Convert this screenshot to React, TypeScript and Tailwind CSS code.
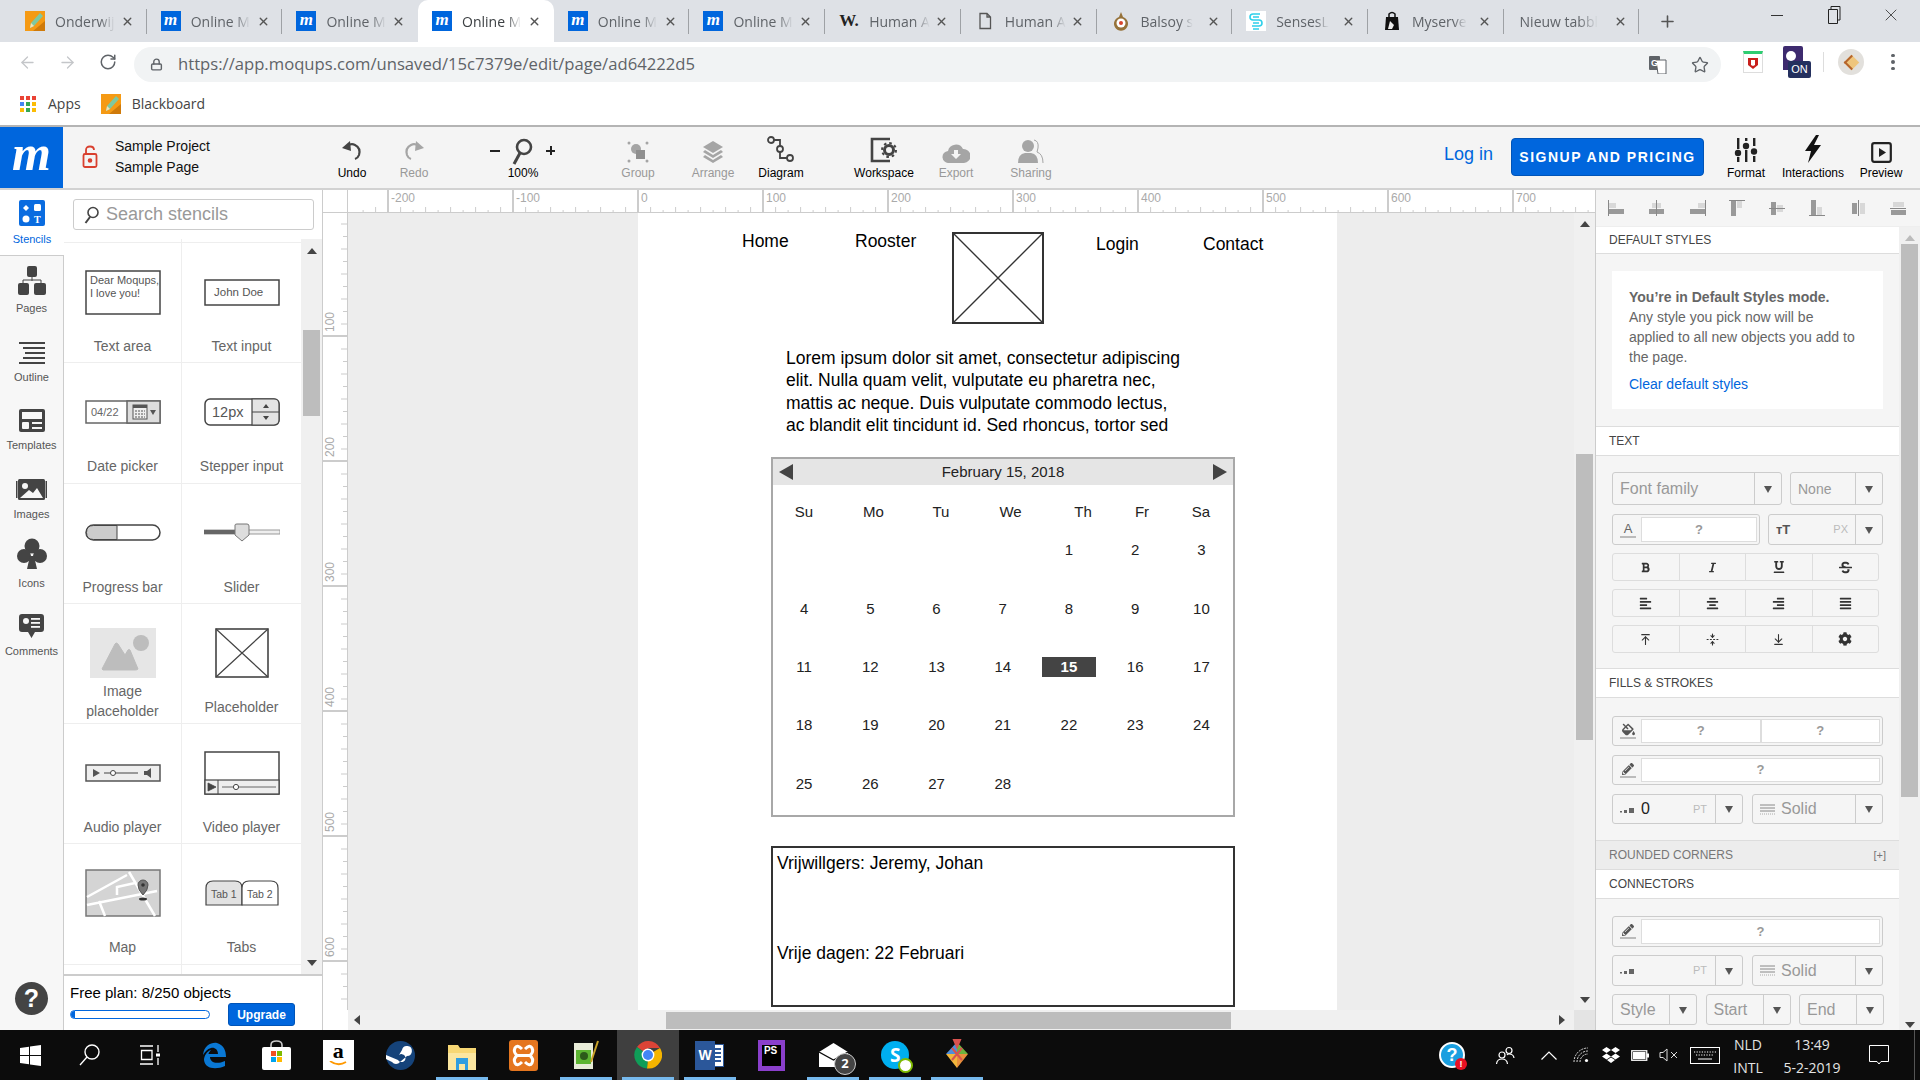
import { ReactNode } from "react";
import { ArrowDownToLine, ArrowLeft, ArrowRight, ArrowUpToLine, FoldVertical, Lock, Plus, RotateCw, Star, X } from "lucide-react";
import { FaAlignCenter, FaAlignJustify, FaAlignLeft, FaAlignRight, FaBold, FaCog, FaFillDrip, FaItalic, FaPencilAlt, FaStrikethrough, FaUnderline } from "react-icons/fa";

const Favicon = ({ kind }: { kind: string }) => {
  if (kind === "m")
    return (
      <div className="w-5 h-5 bg-[#0066dd] flex items-center justify-center text-white font-['Liberation_Serif',serif] italic font-bold text-[17px] leading-none pb-[3px]">
        m
      </div>
    );
  if (kind === "pencil")
    return (
      <svg width="20" height="20" viewBox="0 0 20 20">
        <rect width="20" height="20" fill="#f59a14" />
        <path d="M0 20 L20 20 L20 10 L8 20Z" fill="#cf7a0a" />
        <path d="M5 17 L6 12 L15 2 L18 5 L9 15Z" fill="#7fc8a0" />
        <path d="M5 17 L6 12 L9 15Z" fill="#f5e0b0" />
      </svg>
    );
  if (kind === "w") return <div className="w-5 text-[#222] font-['Liberation_Serif',serif] font-bold text-[17px] leading-5">W.</div>;
  if (kind === "doc")
    return (
      <svg width="20" height="20" viewBox="0 0 20 20" fill="none" stroke="#555" strokeWidth="1.3">
        <path d="M5 2.5 H12 L15.5 6 V17.5 H5Z M12 2.5 V6 H15.5" />
      </svg>
    );
  if (kind === "balsoy")
    return (
      <svg width="20" height="20" viewBox="0 0 20 20">
        <path d="M10 1 L12 6 A7 7 0 1 1 8 6Z" fill="#96723a" />
        <circle cx="10" cy="12" r="4.5" fill="#fff" />
        <circle cx="10" cy="12" r="2" fill="#d8442c" />
      </svg>
    );
  if (kind === "senses")
    return (
      <svg width="20" height="20" viewBox="0 0 20 20" fill="none" stroke="#2fd0ea" strokeWidth="1.6">
        <rect width="20" height="20" fill="#fff" stroke="none" />
        <path d="M14 3 H7 Q4 3 4 6 T7 9 H13 Q16 9 16 12 T13 15 H6 M7 6 H13 M7 12 H13 M7 18 H13" />
      </svg>
    );
  return (
    <svg width="20" height="20" viewBox="0 0 20 20">
      <path d="M4 6 H16 L17 19 H3Z" fill="#111" />
      <path d="M7 7 V3 Q10 0 13 3 V7" fill="none" stroke="#111" strokeWidth="1.5" />
      <path d="M8 10 L12 14 L10 18 H6Z" fill="#eee" />
    </svg>
  );
};

const tabs = [
  { kind: "pencil", title: "Onderwij" },
  { kind: "m", title: "Online M" },
  { kind: "m", title: "Online M" },
  { kind: "m", title: "Online M", active: true },
  { kind: "m", title: "Online M" },
  { kind: "m", title: "Online M" },
  { kind: "w", title: "Human A" },
  { kind: "doc", title: "Human A" },
  { kind: "balsoy", title: "Balsoy s" },
  { kind: "senses", title: "SensesL" },
  { kind: "bag", title: "Myserve" },
  { kind: "", title: "Nieuw tabbl" },
];

const TabStrip = () => (
  <div className="h-[42px] bg-[#dee1e6] flex pl-[11px] shrink-0 font-['Open_Sans',sans-serif]">
    {tabs.map((t, i) => (
      <div
        key={i}
        className={`relative w-[135.7px] h-[42px] flex items-center ${t.kind ? "pl-[14px]" : "pl-[16px]"} ${t.active ? "bg-white rounded-t-[10px]" : ""}`}
      >
        {t.kind && <Favicon kind={t.kind} />}
        <span
          className={`${t.kind ? "ml-[10px]" : ""} whitespace-nowrap text-[14px] [mask-image:linear-gradient(to_right,black_75%,transparent)] ${t.active ? "text-[#3c4043]" : "text-[#5f6368]"}`}
        >
          {t.title}
        </span>
        <X size={13} strokeWidth={2.6} className="absolute left-[110px] top-[15px] text-[#555]" />
        {!t.active && i !== 2 && <div className="absolute right-0 top-[9px] h-[25px] w-px bg-[#9ea1a5]" />}
      </div>
    ))}
    <Plus size={19} strokeWidth={2} className="ml-[19px] mt-[12px] text-[#555]" />
    <div className="ml-auto flex items-start text-[#333]">
      <div className="w-[57px] h-[30px] flex items-center justify-center"><div className="w-3 h-px bg-[#333]" /></div>
      <div className="w-[57px] h-[30px] flex items-center justify-center">
        <svg width="14" height="22" viewBox="0 0 14 22" fill="none" stroke="#222"><path d="M1.5 5.5 H10.5 V19.5 H1.5Z M4 5 V2.5 H13 V16 H11" /></svg>
      </div>
      <div className="w-[58px] h-[30px] flex items-center justify-center"><X size={20} strokeWidth={1} /></div>
    </div>
  </div>
);

const AddressBar = () => (
  <div className="h-[40px] bg-white flex items-center shrink-0 font-['Open_Sans',sans-serif] relative">
    <ArrowLeft size={19} strokeWidth={1.6} className="ml-[18px] text-[#c4c6c9]" />
    <ArrowRight size={19} strokeWidth={1.6} className="ml-[21px] text-[#c4c6c9]" />
    <RotateCw size={18} strokeWidth={2} className="ml-[22px] text-[#5f6368]" />
    <div className="ml-[17px] w-[1587px] h-[35px] mt-[5px] bg-[#f1f3f4] rounded-full flex items-center pl-[16px] self-start">
      <Lock size={13} strokeWidth={2.6} className="text-[#5f6368]" />
      <span className="ml-[15px] text-[#5f6368] text-[16.65px] whitespace-nowrap">https://app.moqups.com/unsaved/15c7379e/edit/page/ad64222d5</span>
      <div className="ml-auto mr-[12px] flex items-center gap-[24px]">
        <svg width="18" height="18" viewBox="0 0 18 18">
          <rect x="0" y="0" width="11" height="14" rx="1" fill="#5f6368" />
          <path d="M7 4 H17 V18 H9Z" fill="#fff" stroke="#5f6368" />
          <text x="2" y="10" fontSize="9" fontWeight="700" fill="#fff" fontFamily="Liberation Sans">G</text>
        </svg>
        <Star size={18} strokeWidth={1.8} className="text-[#5f6368]" />
      </div>
    </div>
    <div className="ml-[22px] w-[20px] h-[22px] border border-[#ddd] border-t-[3px] border-t-[#2ecc71] flex items-center justify-center">
      <svg width="12" height="13" viewBox="0 0 12 13"><path d="M1 1 H11 V8 L6 12 L1 8Z" fill="#c8201c" /><path d="M4 3 V8 L6 9 L8 8 V3" fill="#fff" /></svg>
    </div>
    <div className="relative ml-[20px] w-[28px] h-[32px]">
      <div className="w-[20px] h-[24px] bg-[#3d2a6e] rounded-t-[2px]" />
      <div className="absolute left-[3px] top-[5px] w-[10px] h-[10px] bg-white rounded-full" />
      <div className="absolute right-0 bottom-0 bg-[#24305e] text-white text-[11px] leading-[17px] h-[17px] w-[23px] text-center font-['Liberation_Sans',sans-serif] rounded-[2px]">ON</div>
    </div>
    <div className="ml-[12px] w-px h-[20px] bg-[#ddd]" />
    <div className="ml-[14px] w-[26px] h-[26px] rounded-full bg-[#e2e0dc] flex items-center justify-center">
      <div className="w-[11px] h-[11px] rotate-45 bg-[#eec57c] border-l-2 border-b-2 border-[#b5652c]" />
    </div>
    <div className="ml-[27px] flex flex-col gap-[3px]">
      <div className="w-[3.5px] h-[3.5px] rounded-full bg-[#5f6368]" />
      <div className="w-[3.5px] h-[3.5px] rounded-full bg-[#5f6368]" />
      <div className="w-[3.5px] h-[3.5px] rounded-full bg-[#5f6368]" />
    </div>
  </div>
);

const BookmarksBar = () => {
  const colors = ["bg-[#ea4335]", "bg-[#ea4335]", "bg-[#ea4335]", "bg-[#4285f4]", "bg-[#34a853]", "bg-[#fbbc05]", "bg-[#fbbc05]", "bg-[#34a853]", "bg-[#fbbc05]"];
  return (
    <div className="h-[45px] bg-white border-b-2 border-[#b4b4b4] flex items-center shrink-0 text-[14px] text-[#444] font-['Open_Sans',sans-serif] pl-[20px]">
      <div className="grid grid-cols-3 gap-[2px]">
        {colors.map((c, i) => (
          <div key={i} className={`w-[4px] h-[4px] ${c}`} />
        ))}
      </div>
      <span className="ml-[12px]">Apps</span>
      <div className="ml-[20px]"><Favicon kind="pencil" /></div>
      <span className="ml-[11px]">Blackboard</span>
    </div>
  );
};

const ToolBtn = ({ className, label, muted, children }: { className: string; label: string; muted?: boolean; children: ReactNode }) => (
  <div className={`flex flex-col items-center h-full ${className}`}>
    <div className="h-[37px] flex items-end justify-center pb-[1px]">{children}</div>
    <div className={`mt-[2px] text-[12px] leading-[14px] whitespace-nowrap ${muted ? "text-[#999]" : "text-black"}`}>{label}</div>
  </div>
);

const AppToolbar = () => (
  <div className="h-[63px] bg-[#f4f4f4] border-b-2 border-[#d2d2d2] flex shrink-0">
    <div className="w-[63px] h-full bg-[#0066dd] text-white flex items-center justify-center font-['Liberation_Serif',serif] italic font-bold text-[50px] leading-none pb-[10px]">m</div>
    <div className="w-[257px] flex items-center pl-[19px] pb-[2px]">
      <svg width="16" height="24" viewBox="0 0 16 24" fill="none" stroke="#d9402f" strokeWidth="1.8">
        <path d="M4 9 V5 Q4 1.5 8 1.5 Q12 1.5 12 5" />
        <rect x="1.5" y="9" width="13" height="13" rx="1.5" />
        <circle cx="8" cy="15.5" r="1.4" fill="#d9402f" />
      </svg>
      <div className="ml-[17px] text-[14px] leading-[21px] text-[#111] whitespace-nowrap">
        <div>Sample Project</div>
        <div>Sample Page</div>
      </div>
    </div>
    <ToolBtn className="w-[64px]" label="Undo">
      <svg width="22" height="24" viewBox="0 0 22 24" fill="none">
        <path d="M7 7 Q10 4 14 6 Q20 9 18 16 Q17 19 14 20" stroke="#444" strokeWidth="2.2" />
        <path d="M1 9 L9 2 L10 12Z" fill="#444" />
      </svg>
    </ToolBtn>
    <ToolBtn className="w-[60px]" label="Redo" muted>
      <svg width="22" height="24" viewBox="0 0 22 24" fill="none">
        <path d="M15 7 Q12 4 8 6 Q2 9 4 16 Q5 19 8 20" stroke="#a5a5a5" strokeWidth="2.2" />
        <path d="M21 9 L13 2 L12 12Z" fill="#a5a5a5" />
      </svg>
    </ToolBtn>
    <div className="w-[100px] ml-[29px] relative">
      <svg className="absolute left-[39px] top-[11px]" width="22" height="27" viewBox="0 0 22 27" fill="none" stroke="#444">
        <circle cx="12" cy="9" r="7" strokeWidth="2.6" />
        <path d="M8 15 L2 26" strokeWidth="3" />
      </svg>
      <div className="absolute left-[17px] top-[23px] w-[10px] h-[2px] bg-[#222]" />
      <div className="absolute left-[73px] top-[19px] w-[9px] h-[9px]">
        <div className="absolute left-0 top-[3.5px] w-[9px] h-[2px] bg-[#222]" />
        <div className="absolute left-[3.5px] top-0 h-[9px] w-[2px] bg-[#222]" />
      </div>
      <div className="absolute w-full top-[39px] text-center text-[12px] leading-[14px] text-black">100%</div>
    </div>
    <ToolBtn className="w-[70px] ml-[30px]" label="Group" muted>
      <svg width="22" height="22" viewBox="0 0 22 22" fill="#a5a5a5">
        <circle cx="2" cy="2" r="1.5" /><circle cx="20" cy="2" r="1.5" /><circle cx="2" cy="20" r="1.5" /><circle cx="20" cy="20" r="1.5" />
        <circle cx="9" cy="8" r="5" /><rect x="9" y="9" width="9" height="9" fill="#8f8f8f" />
      </svg>
    </ToolBtn>
    <ToolBtn className="w-[80px]" label="Arrange" muted>
      <svg width="22" height="23" viewBox="0 0 22 23" fill="#a5a5a5">
        <path d="M11 1 L21 7 L11 13 L1 7Z" /><path d="M3 10 L11 15 L19 10 L21 12 L11 18 L1 12Z" /><path d="M3 15 L11 20 L19 15 L21 17 L11 23 L1 17Z" />
      </svg>
    </ToolBtn>
    <ToolBtn className="w-[56px]" label="Diagram">
      <svg width="28" height="27" viewBox="0 0 28 27" fill="none" stroke="#444" strokeWidth="1.8">
        <circle cx="4" cy="4" r="3" /><circle cx="13" cy="13" r="3" /><circle cx="23" cy="22" r="3" />
        <path d="M7 4 H13 V10 M13 16 V22 H20" />
      </svg>
    </ToolBtn>
    <ToolBtn className="w-[80px] ml-[35px]" label="Workspace">
      <svg width="28" height="26" viewBox="0 0 28 26" fill="none">
        <path d="M20 2 H2 V24 H20" stroke="#444" strokeWidth="2.6" />
        <circle cx="19" cy="13" r="4.5" stroke="#444" strokeWidth="3" />
        <circle cx="19" cy="13" r="7" stroke="#444" strokeWidth="2" strokeDasharray="2.6 2.9" />
      </svg>
    </ToolBtn>
    <ToolBtn className="w-[64px]" label="Export" muted>
      <svg width="28" height="20" viewBox="0 0 28 20">
        <path d="M7 20 A6 6 0 0 1 6 8 A8 8 0 0 1 21 6 A7 7 0 0 1 22 20Z" fill="#a5a5a5" />
        <path d="M12 7 H16 V11 H19 L14 16 L9 11 H12Z" fill="#f4f4f4" />
      </svg>
    </ToolBtn>
    <ToolBtn className="w-[86px]" label="Sharing" muted>
      <svg width="26" height="24" viewBox="0 0 26 24" fill="#a5a5a5">
        <circle cx="10" cy="7" r="6" /><path d="M0 24 Q0 15 7 14 H13 Q20 15 20 24Z" />
        <path d="M16 1 Q21 2 20 9 L19 13 Q25 15 25 24" fill="none" stroke="#a5a5a5" />
      </svg>
    </ToolBtn>
    <div className="ml-auto flex items-start pr-[8px]">
      <div className="text-[#0066dd] text-[18px] leading-[22px] mt-[16px] mr-[18px]">Log in</div>
      <div className="w-[193px] h-[38px] mt-[11px] bg-[#0066dd] border border-[#0054b8] rounded-[4px] text-white text-[14px] font-bold tracking-[1.5px] flex items-center justify-center mr-[12px] whitespace-nowrap">
        SIGNUP AND PRICING
      </div>
      <ToolBtn className="w-[60px]" label="Format">
        <svg width="24" height="26" viewBox="0 0 24 26" fill="#222">
          <rect x="3" y="1" width="2.4" height="11" /><rect x="3" y="20" width="2.4" height="5" /><circle cx="4" cy="16" r="3.2" />
          <rect x="11" y="1" width="2.4" height="3" /><rect x="11" y="13" width="2.4" height="12" /><circle cx="12" cy="9" r="3.2" />
          <rect x="19" y="1" width="2.4" height="8" /><rect x="19" y="19" width="2.4" height="6" /><circle cx="20" cy="14.5" r="3.2" />
        </svg>
      </ToolBtn>
      <ToolBtn className="w-[74px]" label="Interactions">
        <svg width="18" height="28" viewBox="0 0 18 28" fill="#111"><path d="M12 0 L1 16 H7 L4 28 L17 10 H10 L15 0Z" /></svg>
      </ToolBtn>
      <ToolBtn className="w-[62px]" label="Preview">
        <svg width="21" height="21" viewBox="0 0 21 21" fill="none">
          <rect x="1.2" y="1.2" width="18.6" height="18.6" rx="2" stroke="#222" strokeWidth="2.2" />
          <path d="M8 6 L15 10.5 L8 15Z" fill="#222" />
        </svg>
      </ToolBtn>
    </div>
  </div>
);

const NavItem = ({ label, active, children }: { label: string; active?: boolean; children: ReactNode }) => (
  <div className={`w-full flex flex-col items-center shrink-0 ${active ? "h-[66px] bg-white border-b border-[#ccc] text-[#0066dd]" : "h-[68.7px] text-[#555]"}`}>
    <div className={`flex items-end justify-center ${active ? "h-[36px]" : "h-[39px]"}`}>{children}</div>
    <div className="mt-[6px] text-[11px] leading-[14px] whitespace-nowrap">{label}</div>
  </div>
);

const LeftNav = () => (
  <div className="w-[64px] h-full bg-[#f7f7f7] border-r border-[#ccc] flex flex-col items-center shrink-0 relative">
    <div className="w-[64px] -mr-px">
      <NavItem label="Stencils" active>
        <svg width="26" height="26" viewBox="0 0 26 26">
          <rect width="26" height="26" rx="2" fill="#0a6ce0" />
          <path d="M7 5 L10 8 L7 11 L4 8Z" fill="#fff" /><rect x="15" y="4" width="7" height="7" rx="1.5" fill="#fff" /><circle cx="7" cy="19" r="3.5" fill="#fff" />
          <text x="15" y="23" fontSize="10" fontWeight="700" fill="#fff" fontFamily="Liberation Serif">T</text>
        </svg>
      </NavItem>
    </div>
    <NavItem label="Pages">
      <svg width="28" height="29" viewBox="0 0 28 29" fill="#444">
        <rect x="9" y="0" width="10" height="11" rx="2" /><rect x="0" y="17" width="11" height="12" rx="2" /><rect x="16" y="17" width="12" height="12" rx="2" />
        <path d="M14 11 V15 M5 17 V14 H23 V17" stroke="#444" fill="none" />
      </svg>
    </NavItem>
    <NavItem label="Outline">
      <svg width="26" height="22" viewBox="0 0 26 22" fill="#444">
        <rect width="26" height="2" /><rect x="4" y="5" width="22" height="2" /><rect x="6" y="10" width="20" height="2" /><rect x="4" y="15" width="22" height="2" /><rect y="20" width="26" height="2" />
      </svg>
    </NavItem>
    <NavItem label="Templates">
      <svg width="26" height="23" viewBox="0 0 26 23">
        <rect width="26" height="23" rx="2" fill="#444" /><rect x="3" y="3" width="20" height="7" fill="#f7f7f7" /><rect x="3" y="13" width="7" height="7" rx="1" fill="#f7f7f7" /><rect x="13" y="13" width="10" height="2" fill="#f7f7f7" /><rect x="13" y="18" width="10" height="2" fill="#f7f7f7" />
      </svg>
    </NavItem>
    <NavItem label="Images">
      <svg width="31" height="22" viewBox="0 0 31 22">
        <rect x="2" width="27" height="21" rx="1.5" fill="#444" /><rect y="2" width="1.5" height="17" fill="#444" /><rect x="29.5" y="2" width="1.5" height="17" fill="#444" />
        <circle cx="9" cy="7" r="3" fill="#f7f7f7" /><path d="M4 19 L13 11 L17 14 L21 9 L27 19Z" fill="#f7f7f7" />
      </svg>
    </NavItem>
    <NavItem label="Icons">
      <svg width="30" height="32" viewBox="0 0 30 32" fill="#444">
        <circle cx="15" cy="8" r="7.5" /><circle cx="7" cy="18" r="7" /><circle cx="23" cy="18" r="7" /><path d="M13 18 H17 L20 31 H10Z" />
      </svg>
    </NavItem>
    <NavItem label="Comments">
      <svg width="25" height="24" viewBox="0 0 25 24">
        <path d="M3 0 H22 Q25 0 25 3 V15 Q25 18 22 18 H16 L12.5 24 L9 18 H3 Q0 18 0 15 V3 Q0 0 3 0Z" fill="#444" />
        <circle cx="7" cy="7" r="3" fill="#f7f7f7" /><rect x="12" y="4" width="9" height="1.8" fill="#f7f7f7" /><rect x="12" y="8" width="9" height="1.8" fill="#f7f7f7" /><rect x="12" y="12" width="9" height="1.8" fill="#f7f7f7" />
      </svg>
    </NavItem>
    <div className="mt-auto mb-[15px] w-[33px] h-[33px] rounded-full bg-[#444] text-white text-[25px] font-bold flex items-center justify-center leading-none">?</div>
  </div>
);

const lineStroke = "#444";

const stencils: { label: string; thumb: ReactNode; two?: boolean }[] = [
  {
    label: "Text area",
    thumb: (
      <svg width="76" height="45" viewBox="0 0 76 45">
        <rect x="1" y="1" width="74" height="43" fill="#fff" stroke={lineStroke} strokeWidth="1.5" />
        <text x="5" y="14" fontSize="11" fill="#555" fontFamily="Liberation Sans">Dear Moqups,</text>
        <text x="5" y="27" fontSize="11" fill="#555" fontFamily="Liberation Sans">I love you!</text>
      </svg>
    ),
  },
  {
    label: "Text input",
    thumb: (
      <svg width="76" height="27" viewBox="0 0 76 27">
        <rect x="1" y="1" width="74" height="25" fill="#fff" stroke={lineStroke} strokeWidth="1.5" />
        <text x="10" y="17" fontSize="11.5" fill="#555" fontFamily="Liberation Sans">John Doe</text>
      </svg>
    ),
  },
  {
    label: "Date picker",
    thumb: (
      <svg width="76" height="24" viewBox="0 0 76 24">
        <rect x="1" y="1" width="74" height="22" fill="#fff" stroke="#666" strokeWidth="1.5" />
        <rect x="42" y="1" width="33" height="22" fill="#ddd" stroke="#666" strokeWidth="1.5" />
        <text x="6" y="16" fontSize="11" fill="#666" fontFamily="Liberation Sans">04/22</text>
        <rect x="48" y="5" width="14" height="14" fill="#eee" stroke="#555" />
        <rect x="48" y="5" width="14" height="3" fill="#555" />
        <path d="M50 11 H60 M50 14 H60 M50 17 H60" stroke="#555" strokeDasharray="2 1" />
        <path d="M65 10 H71 L68 15Z" fill="#555" />
      </svg>
    ),
  },
  {
    label: "Stepper input",
    thumb: (
      <svg width="76" height="28" viewBox="0 0 76 28">
        <rect x="1" y="1" width="74" height="26" rx="5" fill="#fff" stroke={lineStroke} strokeWidth="1.5" />
        <path d="M48 1 H70 Q75 1 75 6 V22 Q75 27 70 27 H48Z" fill="#e4e4e4" stroke={lineStroke} strokeWidth="1.2" />
        <path d="M48 14 H75" stroke={lineStroke} />
        <text x="8" y="19" fontSize="14.5" fill="#555" fontFamily="Liberation Sans">12px</text>
        <path d="M59 10 L62 6 L65 10Z M59 18 H65 L62 22Z" fill="#444" />
      </svg>
    ),
  },
  {
    label: "Progress bar",
    thumb: (
      <svg width="76" height="18" viewBox="0 0 76 18">
        <rect x="1" y="1" width="74" height="15" rx="7.5" fill="#fff" stroke={lineStroke} strokeWidth="1.5" />
        <path d="M32 1.5 H8.5 Q1.5 1.5 1.5 8.5 Q1.5 15.5 8.5 15.5 H32Z" fill="#ccc" stroke={lineStroke} />
      </svg>
    ),
  },
  {
    label: "Slider",
    thumb: (
      <svg width="76" height="20" viewBox="0 0 76 20">
        <rect x="0" y="7" width="76" height="4" fill="#eee" stroke="#999" />
        <rect x="0" y="7" width="32" height="4" fill="#666" />
        <path d="M31 2 Q31 1 33 1 H43 Q45 1 45 3 V12 L38 18 L31 12Z" fill="#ddd" stroke="#777" />
      </svg>
    ),
  },
  {
    label: "Image placeholder",
    two: true,
    thumb: (
      <svg width="66" height="50" viewBox="0 0 66 50">
        <rect width="66" height="50" fill="#e6e6e6" />
        <circle cx="51" cy="15" r="8" fill="#bdbdbd" />
        <path d="M12 41 L25 16 Q26 14 28 16 L35 27 L38 22 Q39 21 40 22 L48 41 Q47 42 45 42 H13Z" fill="#bdbdbd" stroke="#bdbdbd" strokeLinejoin="round" />
      </svg>
    ),
  },
  {
    label: "Placeholder",
    thumb: (
      <svg width="54" height="50" viewBox="0 0 54 50" fill="#fff" stroke={lineStroke}>
        <rect x="1" y="1" width="52" height="48" strokeWidth="1.6" />
        <path d="M1 1 L53 49 M53 1 L1 49" strokeWidth="1.2" />
      </svg>
    ),
  },
  {
    label: "Audio player",
    thumb: (
      <svg width="76" height="18" viewBox="0 0 76 18">
        <rect x="1" y="1" width="74" height="16" fill="#eee" stroke="#555" strokeWidth="1.5" />
        <path d="M8 5 L15 9 L8 13Z M59 7 H62 L66 4 V14 L62 11 H59Z" fill="#555" />
        <path d="M19 9 H53" stroke="#444" />
        <circle cx="28" cy="9" r="2.5" fill="#fff" stroke="#444" />
      </svg>
    ),
  },
  {
    label: "Video player",
    thumb: (
      <svg width="76" height="44" viewBox="0 0 76 44">
        <rect x="1" y="1" width="74" height="42" fill="#fff" stroke={lineStroke} strokeWidth="1.5" />
        <rect x="1" y="29" width="74" height="14" fill="#eee" stroke={lineStroke} strokeWidth="1.2" />
        <path d="M14 29 V43" stroke={lineStroke} />
        <path d="M4 32 L12 36 L4 40Z M18 36 H72" fill="#444" stroke="#444" strokeWidth=".8" />
        <circle cx="32" cy="36" r="2.6" fill="#fff" stroke="#444" />
      </svg>
    ),
  },
  {
    label: "Map",
    thumb: (
      <svg width="76" height="48" viewBox="0 0 76 48">
        <rect x="1" y="1" width="74" height="46" fill="#d4d4d4" stroke="#777" strokeWidth="1.5" />
        <path d="M2 28 L42 6 M2 36 L72 22 M14 32 L20 47 M44 3 L70 47 M32 26 L32 18 L50 14" stroke="#fff" strokeWidth="2.5" fill="none" />
        <path d="M58 16 m-5 0 a5 5 0 1 1 10 0 q0 5 -5 10 q-5 -5 -5 -10Z" fill="#777" stroke="#555" />
        <circle cx="58" cy="16" r="1.8" fill="#333" />
        <ellipse cx="58" cy="30" rx="4" ry="1.5" fill="#333" />
      </svg>
    ),
  },
  {
    label: "Tabs",
    thumb: (
      <svg width="74" height="26" viewBox="0 0 74 26">
        <path d="M1 25 V8 Q1 1 8 1 H30 Q37 1 37 8 V25Z" fill="#e2e2e2" stroke={lineStroke} strokeWidth="1.2" />
        <path d="M37 25 V8 Q37 1 44 1 H66 Q73 1 73 8 V25Z" fill="#fff" stroke={lineStroke} strokeWidth="1.2" />
        <text x="6" y="18" fontSize="10.5" fill="#555" fontFamily="Liberation Sans">Tab 1</text>
        <text x="42" y="18" fontSize="10.5" fill="#555" fontFamily="Liberation Sans">Tab 2</text>
      </svg>
    ),
  },
];

const ScrollArrow = ({ dir, className = "" }: { dir: "up" | "down" | "left" | "right"; className?: string }) => {
  const d = { up: "M0 6 L5 0 L10 6Z", down: "M0 0 H10 L5 6Z", left: "M6 0 V10 L0 5Z", right: "M0 0 V10 L6 5Z" }[dir];
  return (
    <svg width={dir === "up" || dir === "down" ? 10 : 6} height={dir === "up" || dir === "down" ? 6 : 10} className={className}>
      <path d={d} fill="#444" />
    </svg>
  );
};

const StencilPanel = () => (
  <div className="w-[259px] h-full bg-white border-r border-[#ccc] flex flex-col shrink-0">
    <div className="h-[49px] shrink-0 pt-[9px] pl-[9px]">
      <div className="w-[241px] h-[31px] border border-[#ccc] rounded-[3px] flex items-center pl-[10px]">
        <svg width="15" height="18" viewBox="0 0 15 18" fill="none" stroke="#444"><circle cx="9" cy="6.5" r="5" strokeWidth="1.6" /><path d="M6 11 L1.5 17" strokeWidth="2" /></svg>
        <span className="ml-[7px] mb-[2px] text-[18px] text-[#999] leading-none">Search stencils</span>
      </div>
    </div>
    <div className="flex-1 flex min-h-0">
      <div className="w-[238px] overflow-hidden">
        <div className="h-[4px] flex border-b border-[#eee]"><div className="w-[118px] border-r border-[#eee]" /></div>
        <div className="w-[238px] grid grid-cols-[118px_120px]">
          {stencils.map((s) => (
            <div key={s.label} className="h-[120.3px] border-b border-r border-[#eee] flex flex-col items-center">
              <div className="mt-[10px] h-[78px] w-full flex items-center justify-center shrink-0">{s.thumb}</div>
              <div className={`text-[14px] leading-[20px] text-[#666] text-center ${s.two ? "-mt-[11px] w-[80px]" : "mt-[5px]"}`}>{s.label}</div>
            </div>
          ))}
        </div>
        <div className="h-[10px] flex"><div className="w-[118px] border-r border-[#eee]" /></div>
      </div>
      <div className="w-[21px] bg-[#f0f0f0] flex flex-col items-center relative">
        <ScrollArrow dir="up" className="mt-[9px]" />
        <div className="mt-[76px] w-[17px] h-[86px] bg-[#bdbdbd]" />
        <ScrollArrow dir="down" className="mt-auto mb-[8px]" />
      </div>
    </div>
    <div className="h-[56px] shrink-0 border-t-2 border-[#ccc] pl-[6px] pr-[27px] relative">
      <div className="mt-[7px] text-[15px] leading-[20px] text-black whitespace-nowrap">Free plan: 8/250 objects</div>
      <div className="flex items-center justify-between">
        <div className="w-[140px] h-[9px] border border-[#0066dd] rounded-full overflow-hidden -mt-[1px]"><div className="w-[4px] h-full bg-[#0066dd]" /></div>
        <div className="w-[67px] h-[23px] bg-[#0066dd] border border-[#0054b8] rounded-[3px] text-white text-[12px] font-bold flex items-center justify-center">Upgrade</div>
      </div>
    </div>
  </div>
);

const TopRuler = () => {
  const ticks = Array.from({ length: 100 }, (_, i) => i);
  return (
    <svg width="1247" height="23" className="block">
      {ticks.map((i) => (
        <rect key={i} x={14.6 + i * 12.5} y={i % 2 === 0 ? 20 : 17} width="1" height="6" fill="#ccc" />
      ))}
      {[-200, -100, 0, 100, 200, 300, 400, 500, 600, 700].map((v, i) => (
        <g key={v}>
          <rect x={39 + i * 125} y="0" width="2" height="23" fill="#ccc" />
          <text x={43 + i * 125} y="12" fontSize="12" fill="#aaa" fontFamily="Liberation Sans">{v}</text>
        </g>
      ))}
      <rect x="0" y="22" width="1247" height="1" fill="#ccc" />
    </svg>
  );
};

const SideRuler = () => (
  <svg width="25" height="797" className="block shrink-0 bg-white">
    {Array.from({ length: 64 }, (_, i) => (
      <rect key={i} x={i % 2 === 0 ? 18 : 20} y={10.5 + i * 12.5} width={i % 2 === 0 ? 6 : 4} height="1" fill="#ccc" />
    ))}
    {[100, 200, 300, 400, 500, 600].map((v, i) => (
      <g key={v}>
        <rect x="0" y={122 + i * 125} width="25" height="2" fill="#ccc" />
        <text transform={`translate(11 ${119 + i * 125}) rotate(-90)`} fontSize="12" fill="#aaa" fontFamily="Liberation Sans">{v}</text>
      </g>
    ))}
    <rect x="24" y="0" width="1" height="797" fill="#ccc" />
  </svg>
);

const week = [[null, null, null, null, 1, 2, 3], [4, 5, 6, 7, 8, 9, 10], [11, 12, 13, 14, 15, 16, 17], [18, 19, 20, 21, 22, 23, 24], [25, 26, 27, 28, null, null, null]];

const Calendar = () => (
  <div className="absolute left-[133px] top-[244px] w-[464px] h-[360px] border-2 border-[#a8a8a8] bg-white text-[15px] text-[#222]">
    <div className="h-[26px] bg-[#e5e5e5] flex items-center justify-between px-[6px]">
      <svg width="14" height="16"><path d="M14 0 V16 L0 8Z" fill="#444" /></svg>
      <span className="text-[15px]">February 15, 2018</span>
      <svg width="14" height="16"><path d="M0 0 V16 L14 8Z" fill="#444" /></svg>
    </div>
    <div className="h-[36px] pt-[17px] leading-[20px] -ml-[2px] w-[464px] grid grid-cols-[66px_73px_62px_77px_68px_50px_68px] text-center">
      {["Su", "Mo", "Tu", "We", "Th", "Fr", "Sa"].map((d) => (
        <div key={d}>{d}</div>
      ))}
    </div>
    <div className="-ml-[2px] w-[463.5px] grid grid-cols-7 auto-rows-[58.4px] text-center">
      {week.flat().map((d, i) => (
        <div key={i} className="flex items-center justify-center">
          {d === 15 ? (
            <div className="w-[54px] h-[20px] leading-[20px] bg-[#444] text-white font-bold">15</div>
          ) : (
            d
          )}
        </div>
      ))}
    </div>
  </div>
);

const Canvas = () => (
  <div className="flex-1 min-w-0 relative overflow-hidden bg-[#ededed]">
    <div className="absolute left-[290px] top-0 w-[699px] h-[800px] bg-white text-[17.5px] leading-[20px] text-black">
      <div className="absolute left-[104px] top-[18px]">Home</div>
      <div className="absolute left-[217px] top-[18px]">Rooster</div>
      <div className="absolute left-[458px] top-[21px]">Login</div>
      <div className="absolute left-[565px] top-[21px]">Contact</div>
      <svg className="absolute left-[314px] top-[19px]" width="92" height="92" viewBox="0 0 92 92" fill="none" stroke="#333">
        <rect x="1" y="1" width="90" height="90" strokeWidth="2" />
        <path d="M1 1 L91 91 M91 1 L1 91" strokeWidth="1.4" />
      </svg>
      <div className="absolute left-[148px] top-[134px] leading-[22.4px] whitespace-nowrap">
        Lorem ipsum dolor sit amet, consectetur adipiscing<br />
        elit. Nulla quam velit, vulputate eu pharetra nec,<br />
        mattis ac neque. Duis vulputate commodo lectus,<br />
        ac blandit elit tincidunt id. Sed rhoncus, tortor sed
      </div>
      <Calendar />
      <div className="absolute left-[133px] top-[633px] w-[464px] h-[161px] border-2 border-[#333] pl-[4px] pt-[5px]">
        <div>Vrijwillgers: Jeremy, Johan</div>
        <div className="mt-[70px]">Vrije dagen: 22 Februari</div>
      </div>
    </div>
  </div>
);

const CenterArea = () => (
  <div className="flex-1 min-w-0 h-full flex flex-col">
    <div className="h-[23px] flex shrink-0 bg-white">
      <div className="w-[25px] border-r border-b border-[#ccc]" />
      <TopRuler />
    </div>
    <div className="h-[797px] flex shrink-0">
      <SideRuler />
      <Canvas />
      <div className="w-[21px] bg-[#f0f0f0] flex flex-col items-center">
        <ScrollArrow dir="up" className="mt-[8px]" />
        <div className="mt-[227px] w-[17px] h-[286px] bg-[#bdbdbd]" />
        <ScrollArrow dir="down" className="mt-auto mb-[7px]" />
      </div>
    </div>
    <div className="flex-1 bg-white flex">
      <div className="w-[25px]" />
      <div className="flex-1 bg-[#f0f0f0] flex items-center pl-[6px] relative">
        <ScrollArrow dir="left" />
        <div className="ml-[306px] w-[565px] h-[17px] bg-[#bdbdbd]" />
        <ScrollArrow dir="right" className="ml-[328px]" />
      </div>
      <div className="w-[21px] bg-[#e4e4e4]" />
    </div>
  </div>
);

const PanelHead = ({ children, right, muted }: { children: ReactNode; right?: ReactNode; muted?: boolean }) => (
  <div className={`h-[29px] flex items-center justify-between pl-[13px] pr-[13px] text-[12px] border-b border-[#ddd] ${muted ? "bg-[#ededed] text-[#777]" : "bg-white text-[#444]"}`}>
    <span>{children}</span>
    {right}
  </div>
);

const Caret = () => <svg width="8" height="8" className="shrink-0"><path d="M0 1 H8 L4 8Z" fill="#555" /></svg>;

const Select = ({ className, children }: { className: string; children?: ReactNode }) => (
  <div className={`h-full border border-[#ccc] rounded-[3px] flex items-center bg-[#f5f5f5] ${className}`}>
    <div className="flex-1 min-w-0 flex items-center pl-[7px] h-full">{children}</div>
    <div className="w-[27px] h-full border-l border-[#ccc] flex items-center justify-center"><Caret /></div>
  </div>
);

const SwatchField = ({ className, icon, cells = 1 }: { className: string; icon: ReactNode; cells?: number }) => (
  <div className={`h-full border border-[#ccc] rounded-[3px] flex items-center p-[2px] bg-[#f5f5f5] ${className}`}>
    <div className="w-[26px] flex flex-col items-center text-[#555]">
      {icon}
      <div className="w-[16px] h-[2px] bg-[#bbb] mt-[1px]" />
    </div>
    {Array.from({ length: cells }, (_, i) => (
      <div key={i} className="flex-1 h-full bg-white border border-[#ddd] text-[#999] text-[13px] font-bold flex items-center justify-center">?</div>
    ))}
  </div>
);

const BtnRow = ({ icons }: { icons: ReactNode[] }) => (
  <div className="ml-[16px] w-[267px] h-[28px] border border-[#ddd] rounded-[3px] flex bg-[#f5f5f5] text-[#333]">
    {icons.map((ic, i) => (
      <div key={i} className={`flex-1 flex items-center justify-center ${i < 3 ? "border-r border-[#ddd]" : ""}`}>{ic}</div>
    ))}
  </div>
);

const dots = (
  <svg width="15" height="7" className="shrink-0"><rect x="0" y="5" width="2" height="1.5" fill="#666" /><rect x="4" y="4" width="3" height="3" fill="#666" /><rect x="9" y="2" width="5" height="5" fill="#666" /></svg>
);
const solidLines = (
  <svg width="15" height="11" className="shrink-0"><path d="M0 1 H15 M0 4 H15 M0 7 H15" stroke="#888" /><path d="M0 10 H15" stroke="#aaa" strokeDasharray="1 1" /></svg>
);

const AlignIcon = ({ a, b, line }: { a: number[]; b: number[]; line: number[] }) => (
  <svg width="17" height="17" viewBox="0 0 17 17">
    <rect x={a[0]} y={a[1]} width={a[2]} height={a[3]} fill="#999" />
    <rect x={b[0]} y={b[1]} width={b[2]} height={b[3]} fill="#d8d8d8" />
    <rect x={line[0]} y={line[1]} width={line[2]} height={line[3]} fill="#888" />
  </svg>
);

const RightPanel = () => (
  <div className="w-[325px] h-full bg-[#f5f5f5] border-l border-[#ccc] flex flex-col shrink-0 overflow-hidden">
    <div className="h-[37px] shrink-0 flex items-center pl-[12px] gap-[23.3px] border-b border-[#eee]">
      <AlignIcon a={[1, 9, 15, 5]} b={[1, 3, 7, 5]} line={[0, 0, 1, 16]} />
      <AlignIcon a={[1, 9, 15, 5]} b={[4, 3, 9, 5]} line={[8, 0, 1, 16]} />
      <AlignIcon a={[1, 9, 15, 5]} b={[9, 3, 7, 5]} line={[16, 0, 1, 16]} />
      <AlignIcon a={[2, 1, 5, 15]} b={[8, 1, 5, 7]} line={[0, 0, 16, 1]} />
      <AlignIcon a={[2, 2, 5, 13]} b={[8, 5, 6, 7]} line={[0, 8, 16, 1]} />
      <AlignIcon a={[2, 0, 5, 15]} b={[8, 7, 5, 8]} line={[0, 15, 16, 1]} />
      <AlignIcon a={[2, 3, 5, 11]} b={[10, 3, 5, 11]} line={[8, 0, 1, 16]} />
      <AlignIcon a={[1, 10, 15, 5]} b={[3, 2, 11, 5]} line={[0, 8, 16, 1]} />
    </div>
    <div className="flex-1 flex min-h-0">
      <div className="w-[303px] shrink-0 overflow-hidden">
        <div className="h-[27px] bg-white border-b border-[#ddd] pl-[13px] flex items-center text-[12px] text-[#444]">DEFAULT STYLES</div>
        <div className="mt-[17px] ml-[16px] w-[271px] h-[138px] bg-white pl-[17px] pt-[16px] text-[14px] leading-[20px] text-[#666]">
          <div className="font-bold">You’re in Default Styles mode.</div>
          <div>Any style you pick now will be<br />applied to all new objects you add to<br />the page.</div>
          <div className="mt-[7px] text-[#0066dd]">Clear default styles</div>
        </div>
        <div className="mt-[17px] border-t border-[#ddd]"><PanelHead>TEXT</PanelHead></div>
        <div className="mt-[16px] ml-[16px] h-[33px] flex gap-[8px]">
          <Select className="w-[170px]"><span className="text-[16px] text-[#999]">Font family</span></Select>
          <Select className="w-[93px]"><span className="text-[14px] text-[#999] leading-none">None</span></Select>
        </div>
        <div className="mt-[9px] ml-[16px] h-[31px] flex gap-[8px]">
          <SwatchField className="w-[148px]" icon={<span className="text-[13px] leading-[13px] text-[#666]">A</span>} />
          <Select className="w-[115px]">
            <span className="text-[13px] font-bold text-[#555]">тT</span>
            <span className="ml-auto mr-[7px] text-[11px] text-[#bbb]">PX</span>
          </Select>
        </div>
        <div className="mt-[8px] flex flex-col gap-[8px]">
          <BtnRow icons={[<FaBold size={11} />, <FaItalic size={11} />, <FaUnderline size={12} />, <FaStrikethrough size={13} />]} />
          <BtnRow icons={[<FaAlignLeft size={13} />, <FaAlignCenter size={13} />, <FaAlignRight size={13} />, <FaAlignJustify size={13} />]} />
          <BtnRow icons={[<ArrowUpToLine size={13} />, <FoldVertical size={13} />, <ArrowDownToLine size={13} />, <FaCog size={14} />]} />
        </div>
        <div className="mt-[15px] border-t border-[#ddd]"><PanelHead>FILLS &amp; STROKES</PanelHead></div>
        <div className="mt-[18px] ml-[16px] h-[30px]"><SwatchField className="w-[271px]" cells={2} icon={<FaFillDrip size={13} />} /></div>
        <div className="mt-[9px] ml-[16px] h-[30px]"><SwatchField className="w-[271px]" icon={<FaPencilAlt size={12} />} /></div>
        <div className="mt-[9px] ml-[16px] h-[30px] flex gap-[9px]">
          <Select className="w-[131px]">
            {dots}
            <span className="ml-[6px] text-[16px] text-[#222]">0</span>
            <span className="ml-auto mr-[8px] text-[11px] text-[#bbb]">PT</span>
          </Select>
          <Select className="w-[131px]">
            {solidLines}
            <span className="ml-[6px] text-[16px] text-[#999]">Solid</span>
          </Select>
        </div>
        <div className="mt-[16px] border-t border-[#ddd]">
          <PanelHead muted right={<span className="text-[11px] text-[#777]">[+]</span>}>ROUNDED CORNERS</PanelHead>
        </div>
        <PanelHead>CONNECTORS</PanelHead>
        <div className="mt-[17px] ml-[16px] h-[31px]"><SwatchField className="w-[271px]" icon={<FaPencilAlt size={12} />} /></div>
        <div className="mt-[8px] ml-[16px] h-[31px] flex gap-[9px]">
          <Select className="w-[131px]">
            {dots}
            <span className="ml-auto mr-[8px] text-[11px] text-[#bbb]">PT</span>
          </Select>
          <Select className="w-[131px]">
            {solidLines}
            <span className="ml-[6px] text-[16px] text-[#999]">Solid</span>
          </Select>
        </div>
        <div className="mt-[8px] ml-[16px] h-[31px] flex gap-[8.5px] text-[16px] text-[#999]">
          <Select className="w-[85px]">Style</Select>
          <Select className="w-[85px]">Start</Select>
          <Select className="w-[85px]">End</Select>
        </div>
      </div>
      <div className="w-[21px] bg-[#f0f0f0] flex flex-col items-center">
        <svg width="10" height="6" className="mt-[8px]"><path d="M0 6 L5 0 L10 6Z" fill="#bbb" /></svg>
        <div className="mt-[3px] w-[17px] h-[553px] bg-[#bdbdbd]" />
        <ScrollArrow dir="down" className="mt-auto mb-[2px]" />
      </div>
    </div>
  </div>
);

const TaskIcon = ({ active, open, className = "w-[61.9px]", children }: { active?: boolean; open?: boolean; className?: string; children: ReactNode }) => (
  <div className={`relative h-full flex items-center justify-center ${className} ${active ? "bg-[#3f3f3f]" : ""}`}>
    {children}
    {open && <div className="absolute bottom-0 left-[5px] right-[5px] h-[3px] bg-[#76b9ed]" />}
  </div>
);

const Taskbar = () => (
  <div className="h-[50px] bg-[#0c0c0c] flex shrink-0 font-['Open_Sans',sans-serif] text-[#e4e4e4]">
    <TaskIcon className="w-[60px]">
      <svg width="21" height="21" viewBox="0 0 21 21" fill="#fff"><path d="M0 3 L9 1.7 V10 H0Z M10 1.5 L21 0 V10 H10Z M0 11 H9 V19.3 L0 18Z M10 11 H21 V21 L10 19.5Z" /></svg>
    </TaskIcon>
    <TaskIcon className="w-[59.5px]">
      <svg width="21" height="22" viewBox="0 0 21 22" fill="none" stroke="#fff" strokeWidth="1.4"><circle cx="13" cy="8" r="7" /><path d="M8 13 L1 21" /></svg>
    </TaskIcon>
    <TaskIcon className="w-[60px] mr-[4px]">
      <svg width="20" height="20" viewBox="0 0 20 20" fill="none" stroke="#fff" strokeWidth="1.3"><path d="M0 1 H13 M0 19 H13 M1.5 5.5 H12 V14.5 H1.5Z M18 0 V7 M18 13 V20" /><rect x="16" y="8.5" width="4" height="3" fill="#fff" stroke="none" /></svg>
    </TaskIcon>
    <TaskIcon>
      <svg width="24" height="27" viewBox="0 0 24 27">
        <path d="M1 13 C2 3 10 0 15 1 C22 3 24 9 24 15 H8 C8 20 14 23 23 19 V24 C14 28 3 27 2 18 C2 14 5 9 9 8 C7 10 6.5 11.5 6.5 12 H16 C16 7 12 5 9 6 C5 7 3 10 1 13Z" fill="#0a78d4" />
      </svg>
    </TaskIcon>
    <TaskIcon>
      <svg width="29" height="30" viewBox="0 0 29 30">
        <path d="M9 8 V5 Q9 1 14.5 1 Q20 1 20 5 V8" fill="none" stroke="#ccc" strokeWidth="1.6" />
        <rect y="7" width="29" height="23" rx="2" fill="#fff" />
        <rect x="9" y="11" width="5" height="5" fill="#f25022" /><rect x="15" y="11" width="5" height="5" fill="#7fba00" /><rect x="9" y="17" width="5" height="5" fill="#00a4ef" /><rect x="15" y="17" width="5" height="5" fill="#ffb900" />
      </svg>
    </TaskIcon>
    <TaskIcon>
      <div className="w-[31px] h-[30px] bg-white flex flex-col items-center pt-[1px] text-black font-['Liberation_Serif',serif] font-bold text-[22px] leading-[20px]">
        a
        <svg width="18" height="5" viewBox="0 0 18 5" fill="none"><path d="M1 0 Q9 6 17 1" stroke="#f90" strokeWidth="1.8" /></svg>
      </div>
    </TaskIcon>
    <TaskIcon>
      <svg width="29" height="29" viewBox="0 0 29 29">
        <circle cx="14.5" cy="14.5" r="14.5" fill="#15437a" />
        <path d="M0 14 L12 19 A4 4 0 1 0 13 14 L16 9 A5 5 0 1 1 21 15 L14 21 A5 5 0 0 1 6 21 L0 18Z" fill="#fff" />
      </svg>
    </TaskIcon>
    <TaskIcon open>
      <svg width="28" height="29" viewBox="0 0 28 29">
        <path d="M0 4 H10 L12 7 H28 V29 H0Z" fill="#f7d774" /><rect y="12" width="28" height="17" fill="#fbe6a0" /><rect x="8" y="17" width="12" height="12" fill="#2f9de0" /><rect x="11" y="23" width="6" height="6" fill="#fbe6a0" />
      </svg>
    </TaskIcon>
    <TaskIcon>
      <svg width="29" height="31" viewBox="0 0 29 31">
        <rect width="29" height="31" rx="3" fill="#e5761f" />
        <path d="M13 9 Q8 4 6 8 Q4 12 8 15.5 Q4 19 6 23 Q8 27 13 22 M16 9 Q21 4 23 8 Q25 12 21 15.5 Q25 19 23 23 Q21 27 16 22 M8 15.5 H21" fill="none" stroke="#fff" strokeWidth="3" />
      </svg>
    </TaskIcon>
    <TaskIcon open>
      <svg width="27" height="30" viewBox="0 0 27 30">
        <rect x="2" y="3" width="19" height="26" fill="#e8ecd8" /><rect x="4" y="10" width="15" height="14" fill="#5cb531" /><circle cx="12" cy="16" r="4" fill="#2c5b1a" /><path d="M19 22 L26 1" stroke="#c9a227" strokeWidth="2" />
      </svg>
    </TaskIcon>
    <TaskIcon active open>
      <svg width="28" height="28" viewBox="0 0 28 28">
        <path d="M14 14 L3 6 A13.5 13.5 0 0 1 26 7 H14Z" fill="#db4437" /><path d="M14 14 L26 7 A13.5 13.5 0 0 1 13 27.5Z" fill="#f4b400" /><path d="M14 14 L13 27.5 A13.5 13.5 0 0 1 3 6Z" fill="#0f9d58" />
        <circle cx="14" cy="14" r="6.4" fill="#fff" /><circle cx="14" cy="14" r="5" fill="#4285f4" />
      </svg>
    </TaskIcon>
    <TaskIcon open>
      <div className="relative w-[29px] h-[29px]">
        <div className="absolute right-0 top-[3px] w-[22px] h-[23px] bg-white border border-[#2b579a] flex flex-col items-end gap-[2px] pt-[3px] pr-[2px]">
          <div className="w-[6px] h-[2px] bg-[#2b579a]" /><div className="w-[6px] h-[2px] bg-[#2b579a]" /><div className="w-[6px] h-[2px] bg-[#2b579a]" /><div className="w-[6px] h-[2px] bg-[#2b579a]" />
        </div>
        <div className="absolute left-0 top-0 w-[20px] h-[29px] bg-[#2b579a] text-white text-[14px] font-bold flex items-center justify-center font-['Liberation_Sans',sans-serif]">W</div>
      </div>
    </TaskIcon>
    <TaskIcon>
      <div className="w-[27px] h-[31px] bg-[#8a3fcb] flex items-center justify-center">
        <div className="w-[19px] h-[21px] bg-black text-white text-[10px] font-bold leading-[12px] pl-[2px] font-['Liberation_Sans',sans-serif]">PS</div>
      </div>
    </TaskIcon>
    <TaskIcon open>
      <div className="relative">
        <svg width="29" height="24" viewBox="0 0 29 24"><path d="M0 9 L14.5 0 L29 9 V24 H0Z" fill="#fff" /><path d="M0 9 L14.5 17 L29 9" fill="none" stroke="#0c0c0c" strokeWidth="1.4" /></svg>
        <div className="absolute -right-[8px] -bottom-[8px] w-[22px] h-[22px] rounded-full bg-[#444] border border-[#ccc] text-white text-[13px] font-bold flex items-center justify-center">2</div>
      </div>
    </TaskIcon>
    <TaskIcon open>
      <div className="relative w-[28px] h-[28px] rounded-full bg-[#00aff0] flex items-center justify-center text-white font-bold text-[19px] leading-none">
        S
        <div className="absolute -right-[4px] -bottom-[4px] w-[15px] h-[15px] rounded-full bg-white border-2 border-[#7fba00]" />
      </div>
    </TaskIcon>
    <TaskIcon open>
      <svg width="26" height="32" viewBox="0 0 26 32">
        <path d="M13 3 L24 15 L13 15Z" fill="#6db33f" /><path d="M13 3 L2 15 L13 15Z" fill="#4f8fdc" /><path d="M2 15 L13 29 L13 15Z" fill="#f3b73b" /><path d="M24 15 L13 29 L13 15Z" fill="#e9903d" />
        <path d="M10 1 L16 1 L13 8Z M8 9 L18 21 M18 9 L8 21" stroke="#d9534f" strokeWidth="2" fill="#d9534f" />
      </svg>
    </TaskIcon>
    <div className="ml-auto flex items-center h-full pr-[18px] relative">
      <div className="w-[54px] flex justify-center">
        <div className="relative w-[26px] h-[26px] rounded-full bg-[#1a9fe0] border-2 border-white text-white text-[18px] font-bold flex items-center justify-center font-['Liberation_Sans',sans-serif]">
          ?
          <div className="absolute -right-[4px] -bottom-[4px] w-[12px] h-[12px] rounded-full bg-[#e81123] text-[9px] leading-[12px] text-center">!</div>
        </div>
      </div>
      <div className="w-[52px] flex justify-center">
        <svg width="19" height="19" viewBox="0 0 19 19" fill="none" stroke="#fff" strokeWidth="1.2"><circle cx="13" cy="4.5" r="3" /><circle cx="6" cy="9" r="3" /><path d="M0.5 18 Q1 13 6 13 Q11 13 11.5 18 M11 9 Q11.5 8 13 8 Q17.5 8 18 12" /></svg>
      </div>
      <div className="w-[35px] flex justify-center">
        <svg width="16" height="9" fill="none" stroke="#fff" strokeWidth="1.2"><path d="M0.5 8.5 L8 1 L15.5 8.5" /></svg>
      </div>
      <div className="w-[30px] flex justify-center">
        <svg width="16" height="16" viewBox="0 0 16 16" fill="none" stroke="#ddd"><path d="M1 15 A14 14 0 0 1 15 1 M4 15 A11 11 0 0 1 15 4 M7 15 A8 8 0 0 1 15 7" strokeDasharray="2 1" /><circle cx="13.5" cy="13.5" r="1.6" fill="#fff" stroke="none" /></svg>
      </div>
      <div className="w-[29px] flex justify-center">
        <svg width="18" height="16" viewBox="0 0 18 16" fill="#fff"><path d="M4.5 0 L9 3 L4.5 6 L0 3Z M13.5 0 L18 3 L13.5 6 L9 3Z M4.5 6.5 L9 9.5 L4.5 12.5 L0 9.5Z M13.5 6.5 L18 9.5 L13.5 12.5 L9 9.5Z M9 10.5 L13 13 L9 16 L5 13Z" /></svg>
      </div>
      <div className="w-[30px] flex justify-center">
        <svg width="18" height="11" fill="none"><rect x="0.75" y="0.75" width="15" height="9.5" stroke="#fff" strokeWidth="1.3" /><rect x="2" y="2" width="12.5" height="7" fill="#fff" /><rect x="16" y="3.5" width="2" height="4" fill="#fff" /></svg>
      </div>
      <div className="w-[27px] flex justify-center">
        <svg width="19" height="14" viewBox="0 0 19 14" fill="none" stroke="#ddd"><path d="M1 4.5 H4 L8 1 V13 L4 9.5 H1Z M12 4 L18 10 M18 4 L12 10" /></svg>
      </div>
      <div className="w-[46px] flex justify-center">
        <svg width="30" height="17" viewBox="0 0 30 17" fill="none" stroke="#fff"><rect x="0.5" y="0.5" width="29" height="16" /><path d="M4 5 H26 M6 8 H24" strokeDasharray="1.2 1.4" /><path d="M8 12 H22" /></svg>
      </div>
      <div className="w-[40px] text-[14px] leading-[23px] text-center pt-[1px]"><div>NLD</div><div>INTL</div></div>
      <div className="w-[88px] text-[14px] leading-[23px] text-center whitespace-nowrap pt-[1px]"><div>13:49</div><div>5-2-2019</div></div>
      <div className="w-[46px] flex justify-center">
        <svg width="20" height="20" viewBox="0 0 20 20" fill="none" stroke="#fff"><path d="M0.5 0.5 H19.5 V16.5 H12 L10 19 L8 16.5 H0.5Z" /></svg>
      </div>
      <div className="absolute right-[5px] top-0 bottom-0 w-px bg-[#555]" />
    </div>
  </div>
);

export default function App() {
  return (
    <div className="w-[1920px] h-[1080px] overflow-hidden flex flex-col bg-white font-['Liberation_Sans',Arial,sans-serif]">
      <TabStrip />
      <AddressBar />
      <BookmarksBar />
      <AppToolbar />
      <div className="flex-1 min-h-0 flex">
        <LeftNav />
        <StencilPanel />
        <CenterArea />
        <RightPanel />
      </div>
      <Taskbar />
    </div>
  );
}
